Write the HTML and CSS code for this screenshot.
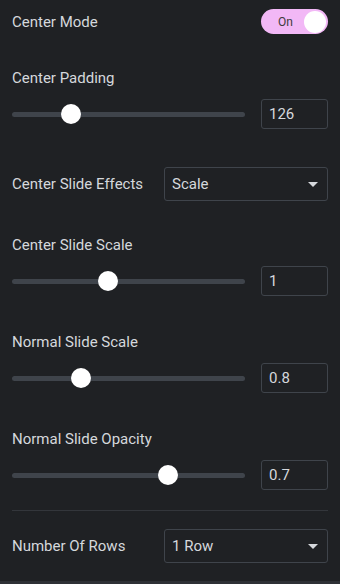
FILE: index.html
```html
<!DOCTYPE html>
<html lang="en">
<head>
    <meta charset="UTF-8">
    <meta name="viewport" content="width=device-width, initial-scale=1.0">
    <title>Carousel Settings</title>
    <link rel="stylesheet" href="styles.css">
</head>
<body>
    <div class="panel">
        <div class="control inline switch-row">
            <span class="label">Center Mode</span>
            <span class="switch"><span class="switch-text">On</span><span class="knob"></span></span>
        </div>

        <div class="control">
            <div class="label">Center Padding</div>
            <div class="slider-row">
                <div class="track"><span class="thumb" style="left: 25.3%;"></span></div>
                <div class="num">126</div>
            </div>
        </div>

        <div class="control inline select-row">
            <span class="label">Center Slide Effects</span>
            <div class="select">Scale<span class="caret"></span></div>
        </div>

        <div class="control">
            <div class="label">Center Slide Scale</div>
            <div class="slider-row">
                <div class="track"><span class="thumb" style="left: 41.2%;"></span></div>
                <div class="num">1</div>
            </div>
        </div>

        <div class="control">
            <div class="label">Normal Slide Scale</div>
            <div class="slider-row">
                <div class="track"><span class="thumb" style="left: 29.6%;"></span></div>
                <div class="num">0.8</div>
            </div>
        </div>

        <div class="control last">
            <div class="label">Normal Slide Opacity</div>
            <div class="slider-row">
                <div class="track"><span class="thumb" style="left: 67%;"></span></div>
                <div class="num">0.7</div>
            </div>
        </div>

        <hr class="divider">

        <div class="control inline select-row">
            <span class="label">Number Of Rows</span>
            <div class="select">1 Row<span class="caret"></span></div>
        </div>
    </div>
    <div class="bottom-bar"></div>
</body>
</html>
```

FILE: styles.css
```css
body {
    margin: 0;
    background: #1f2124;
    font-family: Roboto, "Liberation Sans", sans-serif;
    color: #d5d8dc;
    font-size: 15px;
}
.panel {
    height: 581px;
    box-sizing: border-box;
    padding: 9px 12px 0;
}
.control {
    margin-bottom: 38px;
}
.control.select-row {
    margin-bottom: 36px;
}
.control.last {
    margin-bottom: 20px;
}
.label {
    line-height: 16px;
}
.inline {
    display: flex;
    align-items: center;
    justify-content: space-between;
}
.switch-row {
    margin-bottom: 36px;
}
.switch {
    display: flex;
    align-items: center;
    width: 67px;
    height: 25px;
    box-sizing: border-box;
    padding: 0 2px 0 17px;
    border-radius: 13px;
    background: #f2b8f6;
}
.switch-text {
    flex: 1;
    font-size: 12px;
    color: #3c3c3c;
}
.knob {
    width: 22px;
    height: 22px;
    border-radius: 50%;
    background: #fff;
}
.slider-row {
    display: flex;
    align-items: center;
    gap: 16px;
    margin-top: 13px;
}
.track {
    position: relative;
    flex: 1;
    height: 5px;
    border-radius: 3px;
    background: #3f444b;
}
.thumb {
    position: absolute;
    top: 50%;
    width: 20px;
    height: 20px;
    border-radius: 50%;
    background: #fff;
    transform: translate(-50%, -50%);
}
.num {
    width: 67px;
    height: 30px;
    box-sizing: border-box;
    padding: 0 7px;
    border: 1px solid #3f444b;
    border-radius: 3px;
    line-height: 28px;
}
.select {
    display: flex;
    align-items: center;
    justify-content: space-between;
    width: 164px;
    height: 34px;
    box-sizing: border-box;
    padding: 0 9px 0 7px;
    border: 1px solid #3f444b;
    border-radius: 3px;
}
.caret {
    width: 0;
    height: 0;
    border-left: 5px solid transparent;
    border-right: 5px solid transparent;
    border-top: 5px solid #d5d8dc;
}
.divider {
    margin: 0 0 18px;
    border: 0;
    border-top: 1px solid #33363b;
}
.bottom-bar {
    height: 3px;
    background: #2e3035;
}
```
